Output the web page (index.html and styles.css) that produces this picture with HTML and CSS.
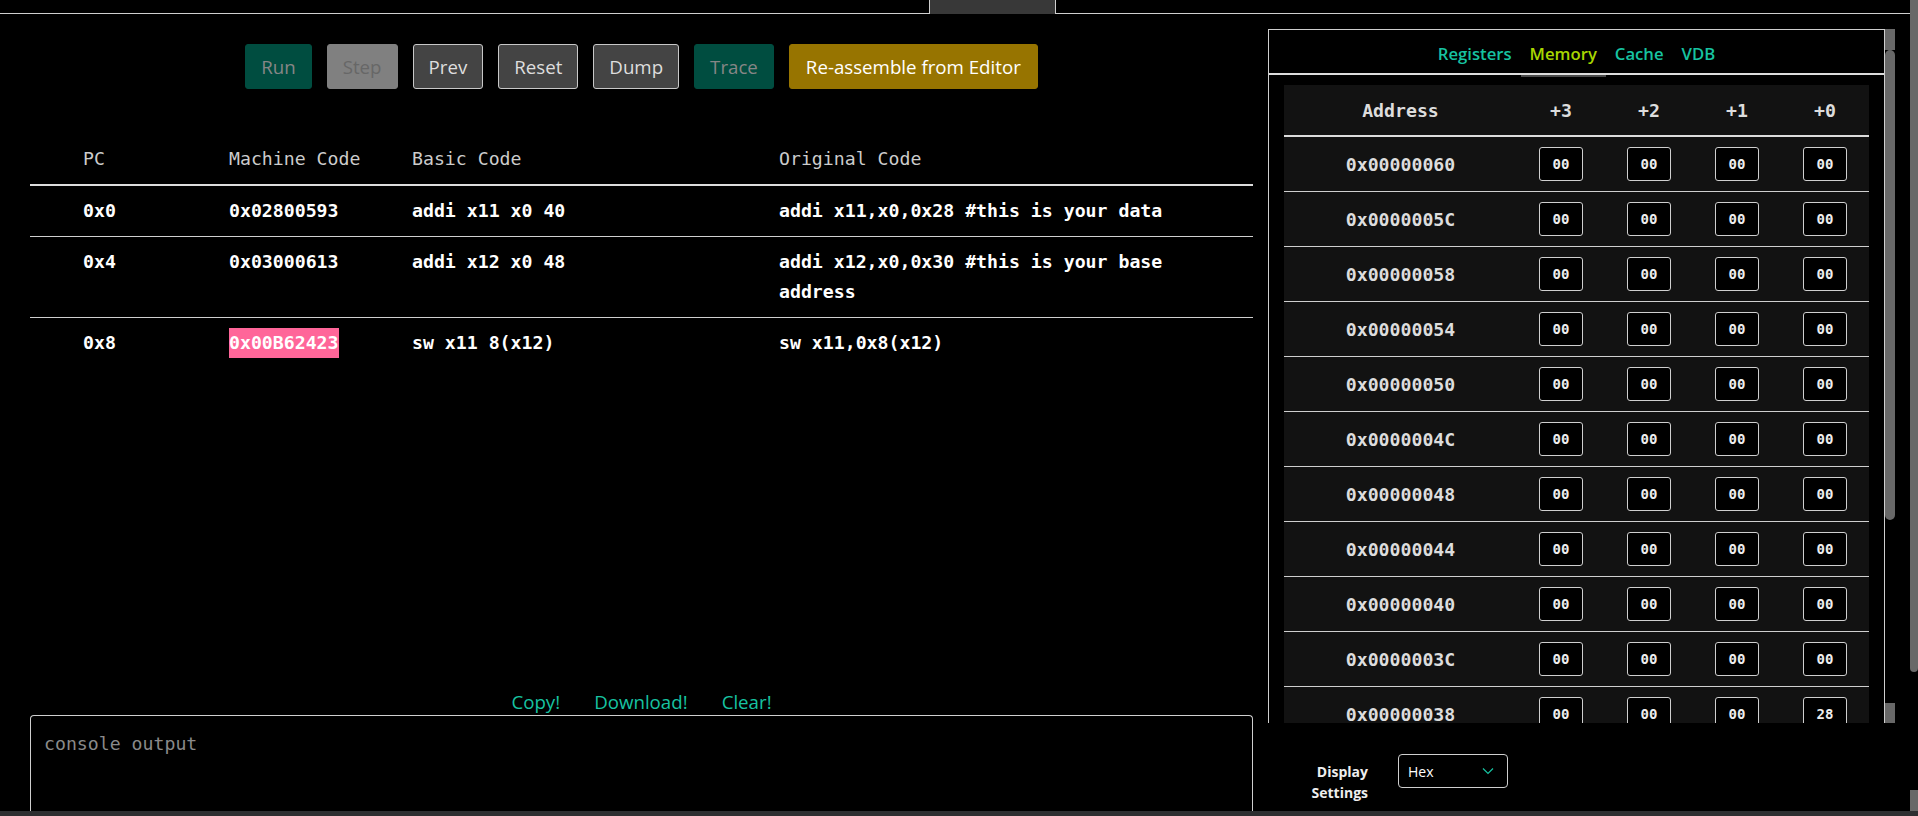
FILE: index.html
```html
<!DOCTYPE html>
<html lang="en">
<head>
<meta charset="utf-8">
<title>Simulator</title>
<link rel="stylesheet" href="styles.css">
</head>
<body>
<div class="window">
  <div class="page">
    <div class="topbar">
      <div class="topbar-line"></div>
      <div class="topbar-tab"></div>
      <div class="topbar-line topbar-rest"></div>
    </div>
    <div class="main">
      <section class="left">
        <div class="toolbar">
          <button class="btn btn-teal">Run</button>
          <button class="btn btn-disabled">Step</button>
          <button class="btn btn-gray">Prev</button>
          <button class="btn btn-gray">Reset</button>
          <button class="btn btn-gray">Dump</button>
          <button class="btn btn-teal">Trace</button>
          <button class="btn btn-gold">Re-assemble from Editor</button>
        </div>
        <div class="code-table">
          <div class="code-row code-head">
            <div>PC</div><div>Machine Code</div><div>Basic Code</div><div>Original Code</div>
          </div>
          <div class="code-row">
            <div>0x0</div><div>0x02800593</div><div>addi x11 x0 40</div><div>addi x11,x0,0x28 #this is your data</div>
          </div>
          <div class="code-row">
            <div>0x4</div><div>0x03000613</div><div>addi x12 x0 48</div><div>addi x12,x0,0x30 #this is your base address</div>
          </div>
          <div class="code-row">
            <div>0x8</div><div><span class="hl">0x00B62423</span></div><div>sw x11 8(x12)</div><div>sw x11,0x8(x12)</div>
          </div>
        </div>
        <div class="console-actions">
          <a class="link">Copy!</a>
          <a class="link">Download!</a>
          <a class="link">Clear!</a>
        </div>
        <div class="console"><span class="placeholder">console output</span></div>
      </section>

      <section class="right">
        <div class="panel-wrap">
          <div class="panel">
            <div class="tabs">
              <span class="tab">Registers</span>
              <span class="tab active">Memory</span>
              <span class="tab">Cache</span>
              <span class="tab">VDB</span>
            </div>
            <div class="mem-table">
              <div class="mem-head">
                <div>Address</div><div>+3</div><div>+2</div><div>+1</div><div>+0</div>
              </div>
              <div class="mem-row"><div class="addr">0x00000060</div><span class="cell">00</span><span class="cell">00</span><span class="cell">00</span><span class="cell">00</span></div>
              <div class="mem-row"><div class="addr">0x0000005C</div><span class="cell">00</span><span class="cell">00</span><span class="cell">00</span><span class="cell">00</span></div>
              <div class="mem-row"><div class="addr">0x00000058</div><span class="cell">00</span><span class="cell">00</span><span class="cell">00</span><span class="cell">00</span></div>
              <div class="mem-row"><div class="addr">0x00000054</div><span class="cell">00</span><span class="cell">00</span><span class="cell">00</span><span class="cell">00</span></div>
              <div class="mem-row"><div class="addr">0x00000050</div><span class="cell">00</span><span class="cell">00</span><span class="cell">00</span><span class="cell">00</span></div>
              <div class="mem-row"><div class="addr">0x0000004C</div><span class="cell">00</span><span class="cell">00</span><span class="cell">00</span><span class="cell">00</span></div>
              <div class="mem-row"><div class="addr">0x00000048</div><span class="cell">00</span><span class="cell">00</span><span class="cell">00</span><span class="cell">00</span></div>
              <div class="mem-row"><div class="addr">0x00000044</div><span class="cell">00</span><span class="cell">00</span><span class="cell">00</span><span class="cell">00</span></div>
              <div class="mem-row"><div class="addr">0x00000040</div><span class="cell">00</span><span class="cell">00</span><span class="cell">00</span><span class="cell">00</span></div>
              <div class="mem-row"><div class="addr">0x0000003C</div><span class="cell">00</span><span class="cell">00</span><span class="cell">00</span><span class="cell">00</span></div>
              <div class="mem-row"><div class="addr">0x00000038</div><span class="cell">00</span><span class="cell">00</span><span class="cell">00</span><span class="cell">28</span></div>
            </div>
          </div>
          <div class="vscroll">
            <div class="vs-btn"></div>
            <div class="vs-thumb"></div>
            <div class="vs-btn vs-btn-down"></div>
          </div>
        </div>
        <div class="display-settings">
          <div class="ds-label">Display<br>Settings</div>
          <div class="select">
            <span>Hex</span>
            <svg class="chev" width="12" height="8" viewBox="0 0 12 8"><path d="M1 1.5 L6 6.5 L11 1.5" fill="none" stroke="#17c3a1" stroke-width="1.2"/></svg>
          </div>
        </div>
      </section>
    </div>
  </div>
  <div class="page-scrollbar">
    <div class="ps-thumb"></div>
    <div class="ps-btn"></div>
  </div>
</div>
<div class="bottom-strip"></div>
</body>
</html>
```

FILE: styles.css
```css
html, body {
  margin: 0;
  padding: 0;
  background: #000;
  height: 816px;
  overflow: hidden;
}
body {
  display: flex;
  flex-direction: column;
  font-family: "Open Sans", "Noto Sans", sans-serif;
  color: #fff;
}
.window {
  display: flex;
  height: 811px;
  flex: none;
}
.page {
  width: 1910px;
  display: flex;
  flex-direction: column;
}
.topbar {
  display: flex;
  height: 14px;
  flex: none;
}
.topbar-line {
  width: 929px;
  border-bottom: 1px solid #cfcfcf;
  box-sizing: border-box;
}
.topbar-rest {
  flex: 1;
  width: auto;
}
.topbar-tab {
  width: 127px;
  background: #383838;
  border-left: 1px solid #cfcfcf;
  border-right: 1px solid #cfcfcf;
  box-sizing: border-box;
}
.main {
  display: flex;
  height: 797px;
  overflow: hidden;
}

/* left column */
.left {
  width: 1223px;
  margin-left: 30px;
  padding-top: 30px;
  box-sizing: border-box;
  display: flex;
  flex-direction: column;
}
.toolbar {
  display: flex;
  justify-content: center;
  gap: 15px;
  height: 45px;
  flex: none;
}
.btn {
  font-family: "Open Sans", "Noto Sans", sans-serif;
  font-size: 18.7px;
  padding: 0 15px;
  height: 45px;
  border-radius: 3px;
  border: 1px solid transparent;
  box-sizing: border-box;
  line-height: 43px;
  cursor: pointer;
}
.btn-teal {
  background: #004d40;
  border-color: #004d40;
  color: #868686;
}
.btn-disabled {
  background: #808080;
  border-color: #808080;
  color: #676767;
}
.btn-gray {
  background: #444444;
  border-color: #c8c8c8;
  color: #dedede;
}
.btn-gold {
  background: #977400;
  border-color: #977400;
  color: #fff;
  padding: 0 16px;
}
.code-table {
  margin-top: 43px;
  flex: 1 1 0;
  min-height: 0;
  font-family: "DejaVu Sans Mono", "Liberation Mono", monospace;
  font-size: 18.2px;
}
.code-row {
  display: grid;
  grid-template-columns: 146px 183px 367px 1fr;
  padding: 10px 20px 10px 53px;
  line-height: 30px;
  border-bottom: 1px solid #cfcfcf;
  font-weight: bold;
  color: #fff;
}
.code-row:last-child {
  border-bottom: 0;
}
.code-head {
  padding-top: 12px;
  padding-bottom: 10px;
  border-bottom: 2px solid #dcdcdc;
  font-weight: normal;
  color: #cccccc;
}
.hl {
  display: inline-block;
  background: #ff6699;
  line-height: 30px;
}
.console-actions {
  flex: none;
  height: 24px;
  margin-bottom: 1px;
  display: flex;
  justify-content: center;
  gap: 34px;
  font-size: 18.7px;
  line-height: 24px;
}
.link {
  color: #17c3a1;
  cursor: pointer;
}
.console {
  flex: none;
  height: 96px;
  box-sizing: border-box;
  border: 1px solid #cfcfcf;
  border-bottom: 0;
  border-radius: 4px 4px 0 0;
  padding: 13px;
  font-family: "DejaVu Sans Mono", "Liberation Mono", monospace;
  font-size: 18.2px;
  line-height: 30px;
}
.placeholder {
  color: #8a8a8a;
}

/* right column */
.right {
  margin-left: 15px;
  padding-top: 15px;
  display: flex;
  flex-direction: column;
}
.panel-wrap {
  display: flex;
  height: 694px;
  flex: none;
}
.panel {
  width: 617px;
  box-sizing: border-box;
  border: 1px solid #cfcfcf;
  border-bottom: 0;
  overflow: hidden;
}
.tabs {
  height: 45px;
  box-sizing: border-box;
  padding-top: 3px;
  border-bottom: 2px solid #dcdcdc;
  display: flex;
  justify-content: center;
}
.tab {
  position: relative;
  display: flex;
  align-items: center;
  padding: 0 9px;
  font-size: 16.7px;
  font-weight: 600;
  color: #17c3a1;
}
.tab.active {
  color: #a8d600;
}
.tab.active::after {
  content: "";
  position: absolute;
  left: 0;
  right: 0;
  bottom: -4px;
  height: 2px;
  background: #4a4a4a;
}
.mem-table {
  margin: 10px 15px 0;
  background: #121212;
  font-family: "DejaVu Sans Mono", "Liberation Mono", monospace;
  color: #dddddd;
  font-weight: bold;
}
.mem-head {
  display: grid;
  grid-template-columns: 233px repeat(4, 88px);
  height: 50px;
  align-items: center;
  justify-items: center;
  border-bottom: 2px solid #dcdcdc;
  font-size: 18.2px;
}
.mem-row {
  display: grid;
  grid-template-columns: 233px repeat(4, 88px);
  height: 55px;
  box-sizing: border-box;
  align-items: center;
  justify-items: center;
  border-bottom: 1px solid #cfcfcf;
}
.addr {
  font-size: 18.2px;
}
.cell {
  width: 44px;
  height: 34px;
  box-sizing: border-box;
  border: 1px solid #cfcfcf;
  border-radius: 3px;
  background: #000;
  font-size: 14px;
  font-weight: bold;
  color: #eeeeee;
  display: flex;
  align-items: center;
  justify-content: center;
}
.vscroll {
  width: 10px;
  display: flex;
  flex-direction: column;
}
.vs-btn {
  height: 21px;
  background: #686868;
  flex: none;
}
.vs-thumb {
  height: 470px;
  background: #686868;
  border-radius: 5px;
  flex: none;
}
.vs-btn-down {
  margin-top: auto;
  height: 20px;
}
.display-settings {
  display: flex;
  align-items: flex-start;
  gap: 30px;
  margin-top: 31px;
}
.ds-label {
  width: 100px;
  text-align: right;
  font-size: 14px;
  font-weight: bold;
  line-height: 21px;
  padding-top: 7px;
  color: #eeeeee;
}
.select {
  width: 110px;
  height: 34px;
  box-sizing: border-box;
  border: 1px solid #cfcfcf;
  border-radius: 4px;
  display: flex;
  align-items: center;
  padding: 0 13px 0 9px;
  font-size: 14px;
  color: #fff;
}
.chev {
  margin-left: auto;
}

/* window scrollbar + bottom strip */
.page-scrollbar {
  width: 8px;
  display: flex;
  flex-direction: column;
}
.ps-thumb {
  height: 672px;
  background: #686868;
  border-radius: 0 0 4px 4px;
}
.ps-btn {
  margin-top: auto;
  height: 21px;
  background: #686868;
}
.bottom-strip {
  height: 5px;
  flex: none;
  background: #2e2f31;
}
```
